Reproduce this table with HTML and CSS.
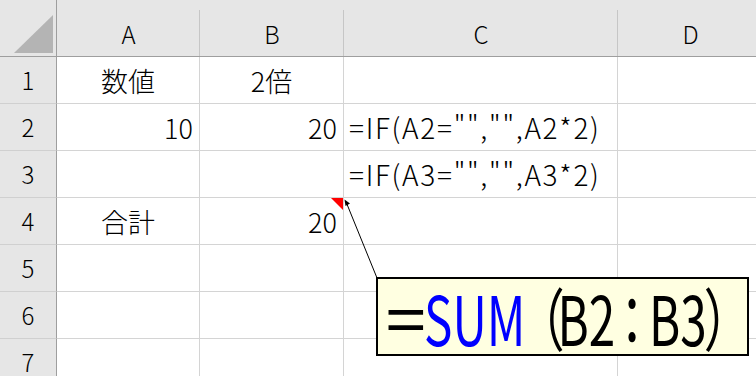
FILE: index.html
```html
<!DOCTYPE html>
<html lang="ja">
<head>
<meta charset="utf-8">
<link rel="stylesheet" href="styles.css">
</head>
<body>
<div class="sheet">
  <div class="grid">
    <div class="corner"><div class="tri"></div></div>
    <div class="ch">A</div>
    <div class="ch">B</div>
    <div class="ch">C</div>
    <div class="ch last">D</div>

    <div class="rh">1</div>
    <div class="c center">数値</div>
    <div class="c center">2倍</div>
    <div class="c"></div>
    <div class="c"></div>

    <div class="rh">2</div>
    <div class="c right">10</div>
    <div class="c right">20</div>
    <div class="c left"><span class="f">=IF(A2="","",A2*2)</span></div>
    <div class="c"></div>

    <div class="rh">3</div>
    <div class="c"></div>
    <div class="c"></div>
    <div class="c left"><span class="f">=IF(A3="","",A3*2)</span></div>
    <div class="c"></div>

    <div class="rh">4</div>
    <div class="c center">合計</div>
    <div class="c right note">20</div>
    <div class="c"></div>
    <div class="c"></div>

    <div class="rh">5</div>
    <div class="c"></div>
    <div class="c"></div>
    <div class="c"></div>
    <div class="c"></div>

    <div class="rh">6</div>
    <div class="c"></div>
    <div class="c"></div>
    <div class="c"></div>
    <div class="c"></div>

    <div class="rh">7</div>
    <div class="c"></div>
    <div class="c"></div>
    <div class="c"></div>
    <div class="c"></div>
  </div>

  <svg class="arrow" width="756" height="376" viewBox="0 0 756 376">
    <line x1="346.5" y1="203" x2="377" y2="278" stroke="#000" stroke-width="1"/>
    <polygon points="344.5,199.5 350,203.5 345.5,206" fill="#000"/>
  </svg>

  <div class="callout"><span class="ctext"><span class="eq">＝</span><span class="fn">SUM</span><span class="op">（</span>B2<span class="col">：</span>B3<span class="cp">）</span></span></div>
</div>
</body>
</html>
```

FILE: styles.css
```css
html, body {
  margin: 0;
  padding: 0;
  background: #fff;
  overflow: hidden;
}

.sheet {
  position: relative;
  width: 756px;
  height: 376px;
  overflow: hidden;
  font-family: "Noto Sans CJK JP", "Noto Sans", sans-serif;
  font-weight: 300;
  color: #000;
}

.grid {
  display: grid;
  grid-template-columns: 57px 143px 144px 274px 145px;
  grid-template-rows: 57px repeat(7, 47px);
}

.corner {
  background: #e6e6e6;
  border-right: 1px solid #9e9e9e;
  border-bottom: 1px solid #9e9e9e;
  box-sizing: border-box;
  position: relative;
}

.tri {
  position: absolute;
  left: 14px;
  top: 15px;
  width: 39px;
  height: 38px;
  background: #b4b4b4;
  clip-path: polygon(100% 0, 100% 100%, 0 100%);
}

.ch {
  background: #e6e6e6 linear-gradient(#c6c6c6, #c6c6c6) no-repeat right bottom / 1px 46px;
  border-bottom: 1px solid #9e9e9e;
  box-sizing: border-box;
  display: flex;
  align-items: center;
  justify-content: center;
  padding-top: 11px;
  font-size: 24px;
  line-height: 1;
}

.rh {
  background: #e6e6e6;
  border-right: 1px solid #9e9e9e;
  border-bottom: 1px solid #d0d0d0;
  box-sizing: border-box;
  display: flex;
  align-items: center;
  justify-content: center;
  font-size: 24px;
  line-height: 1;
}

.c {
  border-right: 1px solid #d4d4d4;
  border-bottom: 1px solid #d4d4d4;
  box-sizing: border-box;
  display: flex;
  align-items: center;
  font-size: 27px;
  line-height: 1;
  white-space: nowrap;
  position: relative;
}

.c.center { justify-content: center; }
.c.right { justify-content: flex-end; padding-right: 6px; }
.c.left { justify-content: flex-start; padding-left: 5px; }

.note::after {
  content: "";
  position: absolute;
  right: 0;
  top: 0;
  width: 12px;
  height: 12px;
  background: #ff0000;
  clip-path: polygon(0 0, 100% 0, 100% 100%);
}

.f {
  font-size: 28px;
  letter-spacing: 1.7px;
}

.arrow {
  position: absolute;
  left: 0;
  top: 0;
  pointer-events: none;
}

.callout {
  position: absolute;
  left: 376px;
  top: 277px;
  width: 373px;
  height: 79px;
  box-sizing: border-box;
  border: 2px solid #000;
  background: #ffffe1;
  display: flex;
  align-items: center;
  padding-left: 4px;
  overflow: hidden;
}

.ctext {
  display: inline-block;
  font-size: 68px;
  font-weight: 400;
  line-height: 1;
  white-space: nowrap;
  transform: scaleX(0.7);
  transform-origin: left center;
}

.eq {
  margin-right: -8px;
}

.op {
  margin-left: -12px;
  margin-right: -10px;
}

.col {
  margin-left: -10px;
  margin-right: -10px;
}

.cp {
  margin-left: -4px;
}

.fn {
  color: #0000ff;
}
```
